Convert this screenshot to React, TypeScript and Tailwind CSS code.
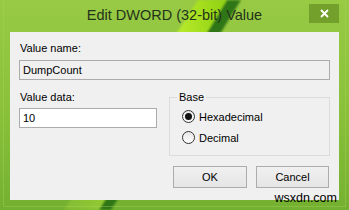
function Radio({ label, checked }: { label: string; checked?: boolean }) {
  return (
    <label className="flex items-center gap-[4px] h-[21px]">
      <span className="w-[13px] h-[13px] rounded-full border border-[#333] bg-[linear-gradient(#e6e6e6,#ffffff)] flex items-center justify-center">
        {checked && <span className="w-[7px] h-[7px] rounded-full bg-[#111]" />}
      </span>
      <span>{label}</span>
    </label>
  );
}

function Button({ children, width }: { children: string; width: string }) {
  return (
    <button
      className={`${width} h-[22px] border border-[#acacac] bg-[linear-gradient(#f0f0f0,#e5e5e5)] text-[11px] text-black`}
    >
      {children}
    </button>
  );
}

function Wallpaper() {
  return (
    <svg className="absolute inset-0" width="349" height="210" viewBox="0 0 349 210">
      <defs>
        <linearGradient id="base" x1="0" y1="0" x2="0" y2="1">
          <stop offset="0" stopColor="#98ca44" />
          <stop offset="0.5" stopColor="#8bc23b" />
          <stop offset="1" stopColor="#74b030" />
        </linearGradient>
        <linearGradient id="lime" x1="0" y1="0" x2="1" y2="0">
          <stop offset="0" stopColor="#a3d83a" stopOpacity="0.3" />
          <stop offset="0.7" stopColor="#b8ea2c" />
          <stop offset="1" stopColor="#8ed10f" />
        </linearGradient>
        <filter id="soft">
          <feGaussianBlur stdDeviation="1.2" />
        </filter>
      </defs>
      <rect width="349" height="210" fill="url(#base)" />
      <g filter="url(#soft)">
        <polygon points="198,0 227,0 99,210 64,210" fill="url(#lime)" />
        <polygon points="227,0 241,0 111,210 99,210" fill="#2e7612" />
      </g>
    </svg>
  );
}

export default function App() {
  return (
    <div className="relative w-[349px] h-[210px] overflow-hidden bg-[#8bc23b] font-['Liberation_Sans',Arial,sans-serif]">
      <Wallpaper />
      {/* faint frame edges */}
      <div className="absolute inset-x-[3px] bottom-[3px] top-0 border-x border-b border-[#a4d45c]/40 pointer-events-none" />

      {/* title bar */}
      <div className="relative h-[32px] flex items-center justify-center">
        <span className="text-[14.5px] text-[#24331a] -mt-[1px]">Edit DWORD (32-bit) Value</span>
        <div className="absolute right-[10px] top-[4px] w-[30px] h-[19px] bg-[#6a9626]/80 flex items-center justify-center">
          <svg width="9" height="9" viewBox="0 0 9 9">
            <path d="M1 1 L8 8 M8 1 L1 8" stroke="#fff" strokeWidth="1.8" />
          </svg>
        </div>
      </div>

      {/* client area */}
      <div className="relative mx-[10px] h-[168px] bg-[#f0f0f0] px-[9px] text-[11px] leading-[14px] text-black flex flex-col">
        <div className="mt-[9px] pl-[1px]">Value name:</div>
        <div className="mt-[5px] h-[20px] border border-[#acacac] bg-[#f0f0f0] px-[3px] flex items-center">
          DumpCount
        </div>

        <div className="mt-[10px] flex gap-[12px]">
          <div className="w-[138px] flex flex-col">
            <div className="pl-[1px]">Value data:</div>
            <div className="mt-[4px] h-[20px] border border-[#acacac] bg-white px-[3px] flex items-center">10</div>
          </div>
          <fieldset className="flex-1 h-[66px] border border-[#dcdcdc] px-[12px] pt-[2px]">
            <legend className="px-[2px] -ml-[5px] leading-[14px]">Base</legend>
            <Radio label="Hexadecimal" checked />
            <Radio label="Decimal" />
          </fieldset>
        </div>

        <div className="mt-[10px] flex justify-end gap-[9px] pr-[1px]">
          <Button width="w-[74px]">OK</Button>
          <Button width="w-[73px]">Cancel</Button>
        </div>
      </div>

      <div className="absolute right-[12px] top-[191px] text-[12.5px] leading-[14px] text-black">wsxdn.com</div>
    </div>
  );
}
